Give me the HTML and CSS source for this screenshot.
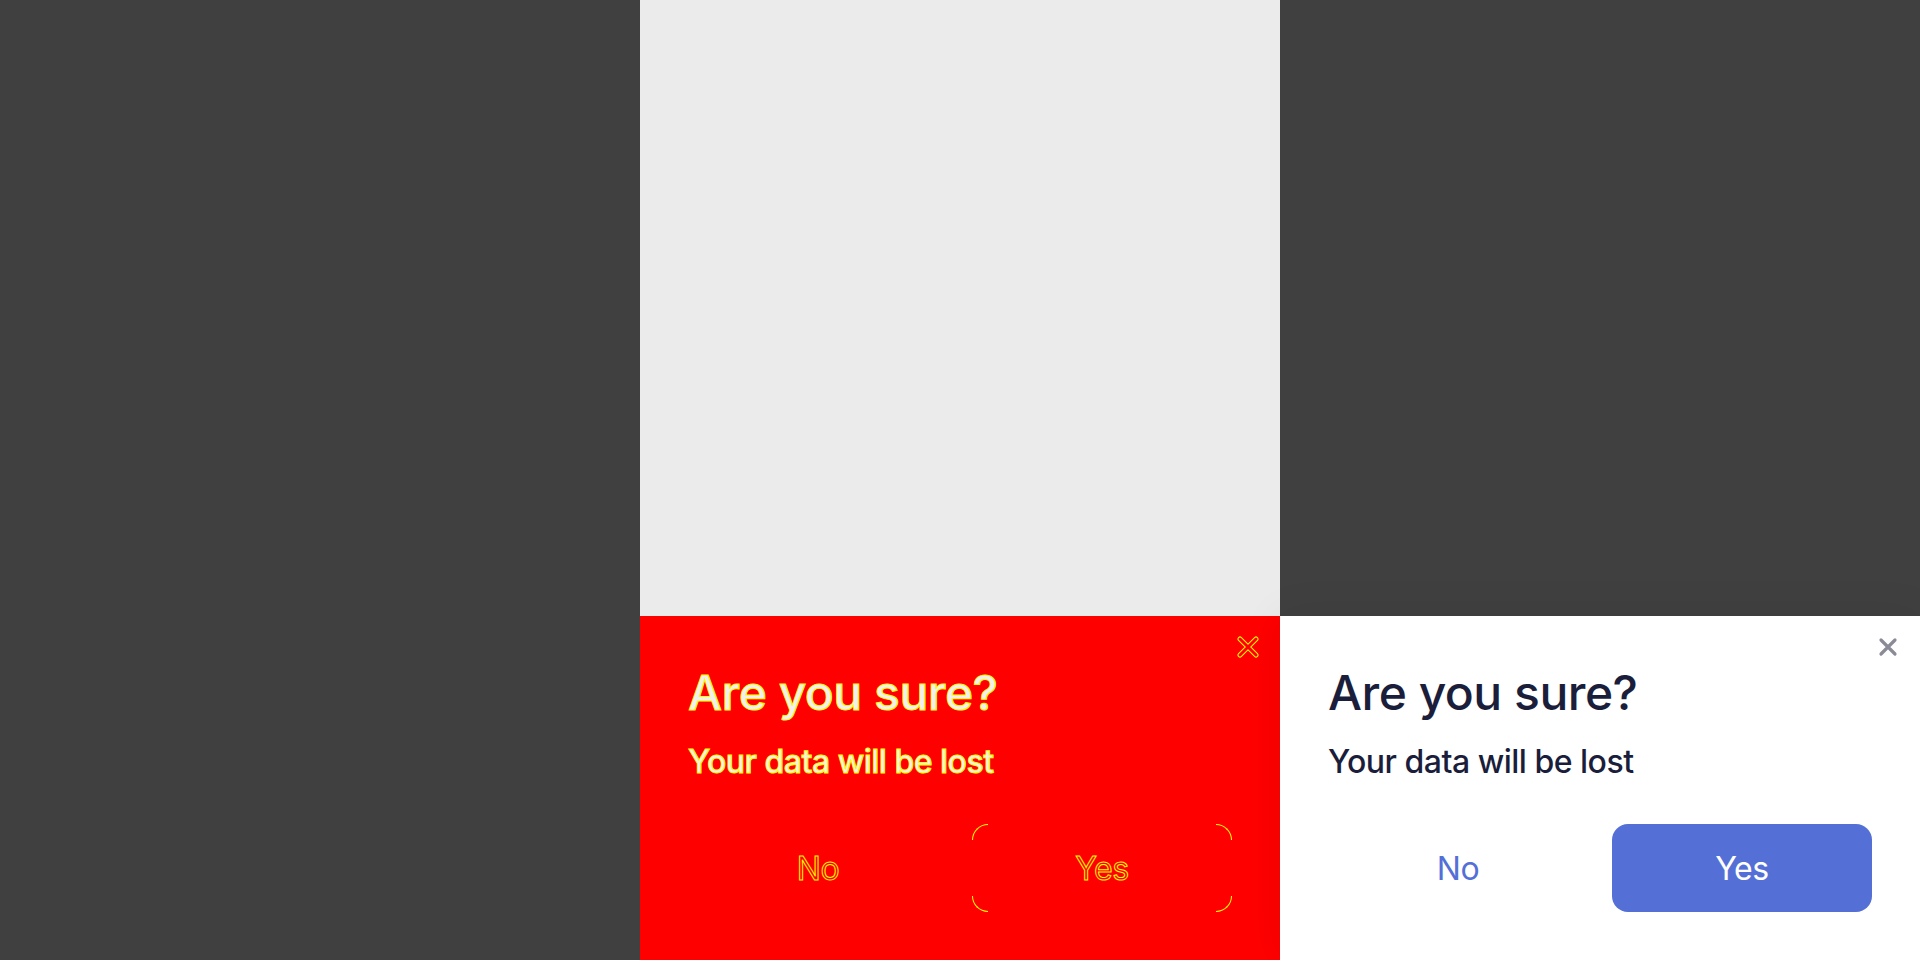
FILE: index.html
```html
<!DOCTYPE html>
<html lang="en">
<head>
<meta charset="utf-8">
<title>Are you sure?</title>
<link rel="stylesheet" href="styles.css">
</head>
<body>
<div class="stage">
  <div class="col col-dark"></div>
  <div class="col col-split">
    <div class="backdrop backdrop-light"></div>
    <section class="dialog dialog-diff">
      <button class="close" aria-label="Close">
        <svg width="22" height="22" viewBox="0 0 22 22">
          <path d="M3 3 L19 19 M19 3 L3 19" stroke="#ffff00" stroke-width="5" stroke-linecap="round" fill="none"/>
          <path d="M3 3 L19 19 M19 3 L3 19" stroke="#ff0000" stroke-width="3" stroke-linecap="round" fill="none"/>
        </svg>
      </button>
      <h1 class="title">Are you sure?</h1>
      <p class="subtitle">Your data will be lost</p>
      <div class="actions">
        <button class="btn btn-no">No</button>
        <button class="btn btn-yes">
          <span class="corner tl"></span><span class="corner tr"></span><span class="corner bl"></span><span class="corner br"></span>
          Yes
        </button>
      </div>
    </section>
  </div>
  <div class="col col-split">
    <div class="backdrop backdrop-dark"></div>
    <section class="dialog dialog-real">
      <button class="close" aria-label="Close">
        <svg width="22" height="22" viewBox="0 0 22 22">
          <path d="M4 4 L18 18 M18 4 L4 18" stroke="#8b8b98" stroke-width="3.2" stroke-linecap="round" fill="none"/>
        </svg>
      </button>
      <h1 class="title">Are you sure?</h1>
      <p class="subtitle">Your data will be lost</p>
      <div class="actions">
        <button class="btn btn-no">No</button>
        <button class="btn btn-yes">Yes</button>
      </div>
    </section>
  </div>
</div>
</body>
</html>
```

FILE: styles.css
```css
* { box-sizing: border-box; }
html, body { margin: 0; padding: 0; }
body {
  width: 1920px;
  height: 960px;
  overflow: hidden;
  font-family: Inter, "Noto Sans", sans-serif;
  background: #404040;
}
.stage {
  display: grid;
  grid-template-columns: 640px 640px 640px;
  height: 960px;
}
.col-dark { background: #404040; }
.col-split {
  display: flex;
  flex-direction: column;
}
.backdrop { flex: 1; }
.backdrop-light { background: #ebebeb; }
.backdrop-dark { background: #404040; }

.dialog {
  position: relative;
  height: 344px;
  padding: 48px 48px 48px;
  display: flex;
  flex-direction: column;
}
.dialog-real {
  background: #ffffff;
  box-shadow: 0 0 40px rgba(0,0,0,0.08);
}
.dialog-diff { background: #ff0000; }

.close {
  position: absolute;
  top: 20px;
  right: 21px;
  width: 22px;
  height: 22px;
  padding: 0;
  border: 0;
  background: transparent;
  display: flex;
}

.title {
  margin: 0;
  font-size: 48px;
  line-height: 58px;
  font-weight: 450;
  letter-spacing: -0.5px;
  color: #1b1e3b;
}
.subtitle {
  margin: 20px 0 0;
  font-size: 32px;
  line-height: 39px;
  font-weight: 450;
  letter-spacing: -0.5px;
  color: #1b1e3b;
}
.actions {
  margin-top: 43px;
  display: grid;
  grid-template-columns: 1fr 1fr;
  gap: 24px;
}
.btn {
  position: relative;
  height: 88px;
  border: 0;
  border-radius: 16px;
  font-family: inherit;
  font-size: 32px;
  font-weight: 400;
  letter-spacing: -0.5px;
  background: transparent;
  padding: 0;
}
.dialog-real .btn-no { color: #5470d6; }
.dialog-real .btn-yes { background: #5470d6; color: #ffffff; }

.dialog-diff .title,
.dialog-diff .subtitle {
  color: #f0f0f0;
  -webkit-text-stroke: 1px #ffff00;
}
.dialog-diff .btn {
  color: #ff0000;
  -webkit-text-stroke: 1px #ffff00;
}
.corner {
  position: absolute;
  width: 16px;
  height: 16px;
  border: 0 solid #ffff00;
}
.corner.tl { top: 0; left: 0; border-top-width: 1px; border-left-width: 1px; border-top-left-radius: 16px; }
.corner.tr { top: 0; right: 0; border-top-width: 1px; border-right-width: 1px; border-top-right-radius: 16px; }
.corner.bl { bottom: 0; left: 0; border-bottom-width: 1px; border-left-width: 1px; border-bottom-left-radius: 16px; }
.corner.br { bottom: 0; right: 0; border-bottom-width: 1px; border-right-width: 1px; border-bottom-right-radius: 16px; }
```
